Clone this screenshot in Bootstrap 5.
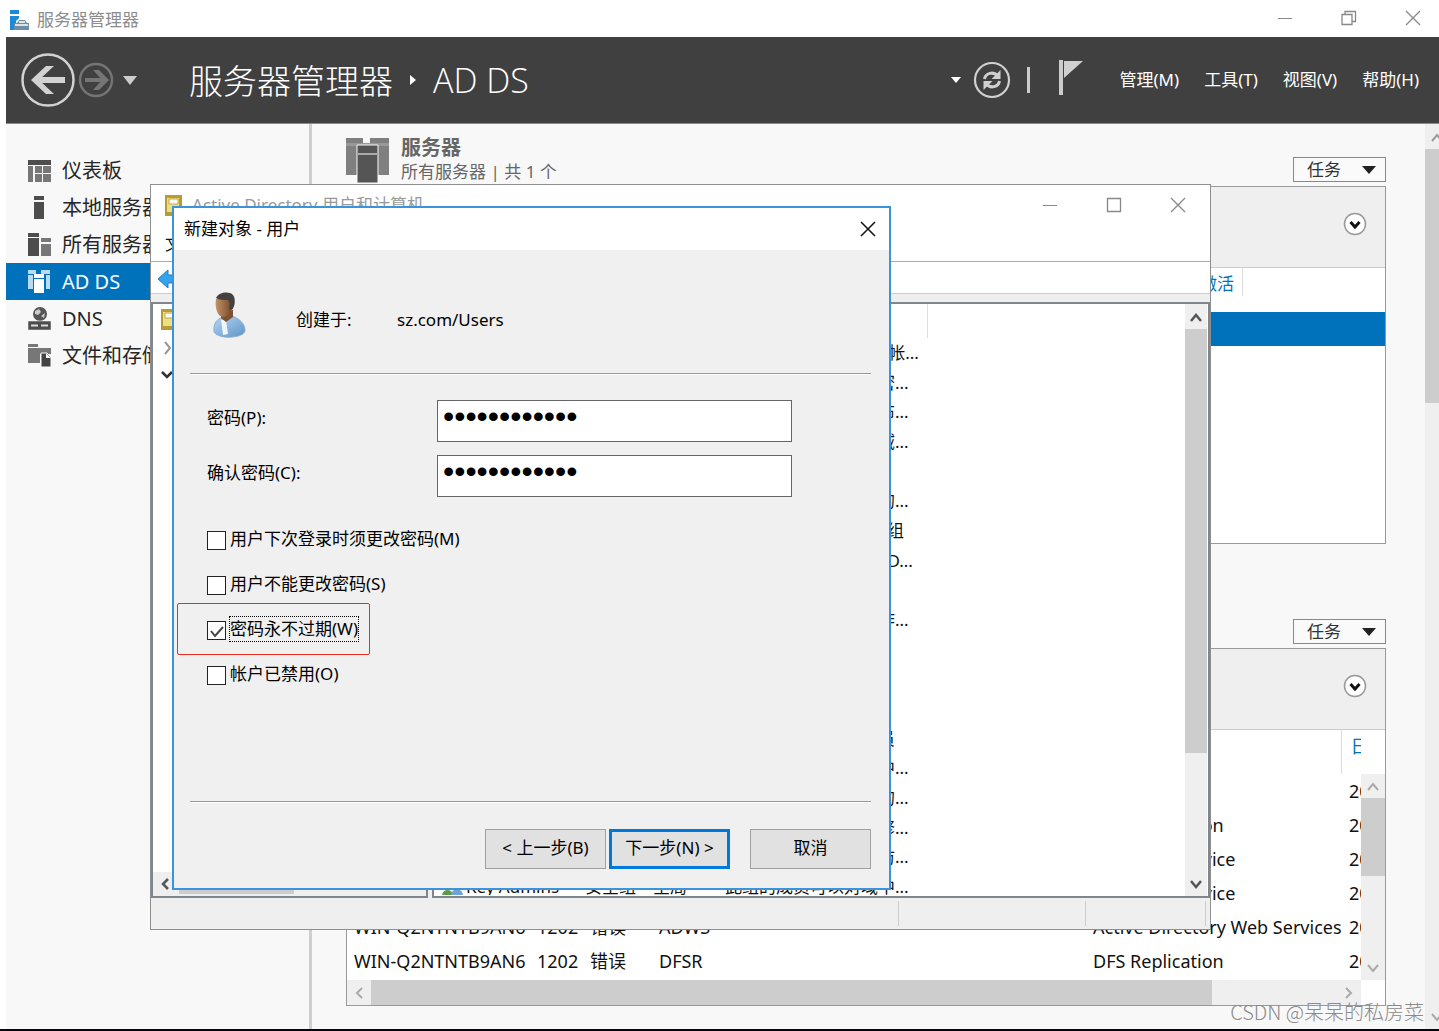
<!DOCTYPE html>
<html lang="zh-CN">
<head>
<meta charset="utf-8">
<meta name="viewport" content="width=device-width, initial-scale=1">
<title>服务器管理器</title>
<link href="https://cdn.jsdelivr.net/npm/bootstrap@5.3.0/dist/css/bootstrap.min.css" rel="stylesheet">
<style>
  body { font-family: "Noto Sans", "Noto Sans CJK SC", sans-serif; font-size: 17px; line-height: 24px; color: #111; background: #fff; }
  svg { display: block; flex: none; }
  button { color: inherit; }
  a { color: inherit; text-decoration: none; }
  .plain-btn { background: none; border: 0; padding: 0; }
  .app-shell { padding-left: 6px; border-bottom: 2px solid #05070d; overflow: hidden; }

  /* outer window */
  .app-title { height: 37px; color: #8c8c8c; padding: 3px 18px 0 3px; }
  .win-ctl { gap: 48px; }
  .app-bar { background: #404040; height: 87px; border-bottom: 1px solid #8b8b8b; color: #fff; padding: 0 20px 0 15px; }
  .crumb { font-size: 34px; line-height: 44px; font-weight: 300; font-family: "Open Sans", "Noto Sans CJK SC", sans-serif; }
  .crumb-cjk { font-family: "Noto Sans CJK SC", sans-serif; padding-left: 4px; }
  .top-menu { gap: 25px; margin-left: 36px; }

  /* navigation */
  .side { width: 306px; border-right: 3px solid #cfcfcf; background: #f8f8f8; padding-top: 28px; }
  .side a { height: 37px; font-size: 20px; padding-left: 22px; gap: 11px; color: #262626; }
  .side a.on { background: #0072bc; color: #fff; }
  .work { background: #f8f8f8; min-width: 0; }
  .tiles { padding: 0 39px 23px 34px; min-width: 0; }
  .tile-head { height: 62px; color: #666; }
  .tile-head.tall { height: 104px; }
  .tile-head h2 { font-size: 20px; line-height: 24px; margin: 0; font-weight: 700; }
  .tasks { width: 93px; height: 25px; border: 1px solid #888; background: #fafafa; padding: 0 9px 0 13px; margin-bottom: 4px; color: #333; line-height: 20px; }
  .tile { height: 358px; border: 1px solid #999; background: #fff; }
  .filter { height: 81px; background: #efefef; border-bottom: 1px solid #ccc; padding-right: 18px; }
  .expander { margin-top: 25px; }
  .col-heads { height: 44px; color: #0072bc; }
  .col-line { border-left: 1px solid #ddd; width: 139px; }
  .picked { height: 34px; background: #0072bc; }
  .events { table-layout: fixed; width: 100%; margin: 0; font-size: 18px; }
  .events td, .events th { padding: 0; height: 34px; line-height: 34px; white-space: nowrap; overflow: hidden; font-weight: 400; }
  .events th { height: 44px; line-height: 32px; color: #0072bc; vertical-align: top; }
  .events th:last-child { border-left: 1px solid #ddd; padding-left: 9px; }
  .events td:last-child { padding-left: 8px; }
  .events td:first-child { padding-left: 7px; }
  .sb { background: #efefef; }
  .sb-thumb { background: #cdcdcd; }
  .event-sb { width: 24px; margin-top: 44px; }
  .page-sb { width: 14px; overflow: hidden; }
  .mark-text { right: 15px; bottom: 5px; font-size: 20px; color: #8a8a8a; font-family: "Noto Sans CJK SC", sans-serif; font-weight: 300; }

  /* windows over the desktop */
  .mmc { left: 150px; top: 184px; width: 1061px; height: 746px; background: #efefef; border: 1px solid #8f8f8f; overflow: hidden; }
  .mmc-title { height: 40px; gap: 10px; background: #fff; color: #999; padding: 0 24px 0 14px; }
  .mmc-menu { height: 36px; background: #fff; padding-left: 14px; line-height: 38px; }
  .mmc-tools { height: 33px; background: #fff; border-top: 1px solid #aaa; border-bottom: 1px solid #ccc; padding: 6px 0 0 6px; }
  .mmc-panes { height: 596px; margin-top: 8px; gap: 4px; }
  .pane { background: #fff; border: 2px solid #80868c; }
  .pane-tree { width: 277px; }
  .list-box { height: 591px; overflow: hidden; min-width: 0; }
  .objects { table-layout: fixed; width: 494px; height: 598px; margin: 0; }
  .objects th { height: 34px; border-right: 1px solid #ddd; padding: 0; }
  .objects td { padding: 0; line-height: 24px; white-space: nowrap; overflow: hidden; }
  .objects td:first-child { padding-left: 32px; }
  .status { height: 31px; }
  .status div { border-right: 1px solid #ccc; margin: 3px 0; }

  .dlg { left: 172px; top: 206px; width: 719px; background: #f0f0f0; border: 2px solid #3b93dc; }
  .dlg-title { height: 42px; background: #fff; padding: 0 13px 0 10px; color: #000; }
  .dlg-body { padding: 42px 18px 19px 16px; color: #000; }
  .dlg-rule { border-top: 1px solid #999; border-bottom: 1px solid #fff; }
  .who { height: 46px; padding-left: 22px; margin-bottom: 35px; }
  .who span { padding-top: 10px; }
  .who span:first-of-type { width: 101px; margin-left: 50px; }
  .fields { padding: 25px 0 0 17px; margin-bottom: 113px; }
  .pw-row { height: 42px; margin-bottom: 13px; }
  .pw-row label { width: 230px; padding-bottom: 6px; }
  .pw { width: 355px; height: 42px; border: 1px solid #666; border-radius: 0; background: #fff; padding: 0 5px 9px 5px; font: 32px/32px "Liberation Sans", sans-serif; color: #000; }
  .picks { padding-top: 17px; }
  .pick-row { height: 26px; margin-bottom: 19px; gap: 4px; position: relative; }
  .pick-row input { appearance: none; width: 19px; height: 19px; border: 1px solid #222; background: #fff; margin: 4px 0 0; border-radius: 0; flex: none; }
  .pick-row .tick { position: absolute; left: 2px; top: 8px; }
  .focused { outline: 1px dotted #000; outline-offset: 0; }
  .redbox { position: absolute; left: -30px; top: -14px; width: 193px; height: 52px; border: 1px solid #ee2b20; border-radius: 2px; }
  .dlg-actions { padding-top: 26px; }
  .dlg-btn { width: 121px; height: 40px; background: #e1e1e1; border: 1px solid #a0a0a0; border-radius: 0; padding: 0 0 3px; }
  .dlg-btn.primary { border: 3px solid #0078d7; margin: 0 20px 0 3px; }
</style>
<script src="https://cdn.jsdelivr.net/npm/bootstrap@5.3.0/dist/js/bootstrap.bundle.min.js"></script>
</head>
<body>
<div class="app-shell min-vh-100 d-flex flex-column position-relative">

  <header class="app-title d-flex align-items-center">
    <svg width="20" height="20" viewBox="0 0 20 20"><path d="M1 0h9v4H1zM1 6h9v2l-3 3v9H1z" fill="#1c8ad6"/><path d="M5 13h3l2-3h6l2 3h2v7H5z" fill="#6f8fa6"/><path d="M10 12h6M6 15h13" stroke="#fff" stroke-width="1.3"/></svg>
    <span class="ms-2">服务器管理器</span>
    <div class="win-ctl d-flex align-items-center ms-auto pb-1">
      <button class="plain-btn" aria-label="最小化"><svg width="16" height="16" stroke="#888"><path d="M1 8.500h14"/></svg></button>
      <button class="plain-btn" aria-label="还原"><svg width="16" height="16" fill="none" stroke="#888" stroke-width="1.300"><path d="M1 4.500h10v10H1zM4 4V1.500h10.500v10H11"/></svg></button>
      <button class="plain-btn" aria-label="关闭"><svg width="16" height="16" stroke="#888" stroke-width="1.300"><path d="M1 1l14 14M15 1L1 15"/></svg></button>
    </div>
  </header>

  <nav class="app-bar d-flex align-items-center">
    <button class="plain-btn" aria-label="后退"><svg width="54" height="54" fill="none" stroke="#d2d2d2"><circle cx="27" cy="27" r="25.500" stroke-width="2.500"/><path d="M44 27H14" stroke-width="6"/><path d="M33 13h-8L10 27l15 14h8L18 27z" fill="#d2d2d2" stroke="none"/></svg></button>
    <button class="plain-btn ms-1" aria-label="前进"><svg width="36" height="38" fill="none" stroke="#757575"><circle cx="17" cy="19" r="16" stroke-width="2.500"/><path d="M6 19h20" stroke-width="4"/><path d="M14 9h6l10 10-10 10h-6l9-10z" fill="#757575" stroke="none"/></svg></button>
    <svg class="ms-2" width="14" height="9"><path d="M0 0h14L7 9z" fill="#ccc"/></svg>
    <span class="crumb crumb-cjk ms-5">服务器管理器</span>
    <svg class="ms-3" width="8" height="12"><path d="M1 1l6 5-6 5z" fill="#fff"/></svg>
    <span class="crumb ms-3">AD DS</span>
    <svg class="ms-auto" width="10" height="6"><path d="M0 0h10L5 6z" fill="#fff"/></svg>
    <button class="plain-btn ms-2 ps-1" aria-label="刷新"><svg width="38" height="38" fill="none" stroke="#d0d0d0"><circle cx="19" cy="19" r="17" stroke-width="2.200"/><path d="M11.500 18c1-6 9-8 13-3M26.500 20c-1 6-9 8-13 3" stroke-width="3"/><path d="M27.500 9v9h-9zM10.500 29v-9h9z" fill="#d0d0d0" stroke="none"/></svg></button>
    <svg class="ms-3" width="3" height="26"><path d="M0 0h3v26H0z" fill="#ccc"/></svg>
    <button class="plain-btn ms-4 pb-1" aria-label="通知"><svg width="30" height="36" viewBox="-5 0 30 36"><path d="M0 0h4v35H0z" fill="#ccc"/><path d="M5 1h19L5 18z" fill="#d0d0d0"/></svg></button>
    <div class="top-menu d-flex"><a href="#">管理(M)</a><a href="#">工具(T)</a><a href="#">视图(V)</a><a href="#">帮助(H)</a></div>
  </nav>

  <div class="d-flex flex-fill">
    <aside class="side flex-shrink-0">
      <a href="#" class="d-flex align-items-center"><svg width="23" height="22"><path d="M0 0h23v5H0z" fill="#4d4d4d"/><path d="M0 6h5v16H0zM7 6h7v7H7zM15 6h8v7h-8zM7 14h7v8H7zM15 14h8v8h-8z" fill="#777"/></svg>仪表板</a>
      <a href="#" class="d-flex align-items-center"><svg width="23" height="23"><path d="M6 0h10v4H6zM6 6h10v17H6z" fill="#4d4d4d"/></svg>本地服务器</a>
      <a href="#" class="d-flex align-items-center"><svg width="23" height="23"><path d="M0 0h11v4H0zM0 5h11v18H0z" fill="#4d4d4d"/><path d="M13 5h10v4H13zM13 11h10v12H13z" fill="#777"/></svg>所有服务器</a>
      <a href="#" class="on d-flex align-items-center"><svg width="23" height="23"><path d="M0 0h8v4H0zM0 5h5v14H0zM13 0h9v4h-9zM18 5h4v14h-4z" fill="#b9daf0"/><path d="M6 4h10v4H6zM6 9h10v14H6z" fill="#fff"/></svg>AD DS</a>
      <a href="#" class="d-flex align-items-center"><svg width="23" height="23"><circle cx="12" cy="7" r="7" fill="#555"/><path d="M7 4l4-2 2 3-3 3-3-1zM13 9l4-3-1 5z" fill="#ccc"/><path d="M0 14h23v9H0z" fill="#4d4d4d" stroke="#f8f8f8" stroke-width=".5"/><path d="M3 18.500h7M13 18.500h7" stroke="#ddd" stroke-width="2"/></svg>DNS</a>
      <a href="#" class="d-flex align-items-center"><svg width="23" height="23"><path d="M0 0h10v3H0zM0 4h23v6H12v9H0z" fill="#777"/><path d="M13 9h6l4 4v10H13z" fill="#444" stroke="#f8f8f8"/><path d="M18 9v5h5z" fill="#f8f8f8"/></svg>文件和存储服务</a>
    </aside>

    <main class="work d-flex flex-fill">
      <div class="tiles flex-fill">
        <section>
          <div class="tile-head d-flex align-items-end">
            <svg width="43" height="48"><path d="M0 0h17v5H0zM0 8h17v29H0zM24 0h19v5H24zM24 8h19v29H24z" fill="#808080"/><path d="M0 5h43v3H0z" fill="#999"/><path d="M11 7h21v38H11z" fill="#555" stroke="#f8f8f8"/><path d="M12 16h19" stroke="#aaa" stroke-width="2"/></svg>
            <div class="ms-2 ps-1 align-self-start pt-2 mt-1"><h2>服务器</h2><div>所有服务器 | 共 1 个</div></div>
            <button class="tasks ms-auto d-flex align-items-center justify-content-between">任务<svg width="14" height="8"><path d="M0 0h14L7 8z" fill="#222"/></svg></button>
          </div>
          <div class="tile">
            <div class="filter d-flex justify-content-end align-items-start"><button class="plain-btn expander" aria-label="展开"><svg width="24" height="24" fill="none"><circle cx="12" cy="12" r="10.500" fill="#fff" stroke="#999" stroke-width="1.500"/><path d="M7.500 10l4.500 5 4.500-5" stroke="#111" stroke-width="3"/></svg></button></div>
            <div class="col-heads d-flex justify-content-end pe-1"><span class="pt-1 pe-2">Windows 激活</span><span class="col-line mb-3"></span></div>
            <div class="picked"></div>
          </div>
        </section>
        <section>
          <div class="tile-head tall d-flex align-items-end">
            <button class="tasks ms-auto d-flex align-items-center justify-content-between">任务<svg width="14" height="8"><path d="M0 0h14L7 8z" fill="#222"/></svg></button>
          </div>
          <div class="tile d-flex flex-column">
            <div class="filter d-flex justify-content-end align-items-start flex-shrink-0"><button class="plain-btn expander" aria-label="展开"><svg width="24" height="24" fill="none"><circle cx="12" cy="12" r="10.500" fill="#fff" stroke="#999" stroke-width="1.500"/><path d="M7.500 10l4.500 5 4.500-5" stroke="#111" stroke-width="3"/></svg></button></div>
            <div class="d-flex flex-fill">
              <div class="flex-fill overflow-hidden">
                <table class="events">
                  <colgroup><col style="width:190px"><col style="width:53px"><col style="width:69px"><col><col style="width:248px"><col style="width:20px"></colgroup>
                  <thead><tr><th></th><th></th><th></th><th></th><th></th><th>日期</th></tr></thead>
                  <tbody>
                    <tr><td></td><td></td><td></td><td></td><td></td><td>2020</td></tr>
                    <tr><td></td><td></td><td></td><td></td><td>DFS Replication</td><td>2020</td></tr>
                    <tr><td></td><td></td><td></td><td></td><td>Directory Service</td><td>2020</td></tr>
                    <tr><td></td><td></td><td></td><td></td><td>Directory Service</td><td>2020</td></tr>
                    <tr><td>WIN-Q2NTNTB9AN6</td><td>1202</td><td>错误</td><td>ADWS</td><td>Active Directory Web Services</td><td>2020</td></tr>
                    <tr><td>WIN-Q2NTNTB9AN6</td><td>1202</td><td>错误</td><td>DFSR</td><td>DFS Replication</td><td>2020</td></tr>
                  </tbody>
                </table>
              </div>
              <div class="sb event-sb d-flex flex-column flex-shrink-0 align-items-center">
                <svg class="my-1" width="12" height="16" fill="none" stroke="#aaa" stroke-width="2"><path d="M1 12l5-6 5 6"/></svg>
                <div class="sb-thumb w-100" style="height:78px"></div>
                <svg class="mt-auto mb-1" width="12" height="16" fill="none" stroke="#aaa" stroke-width="2"><path d="M1 5l5 6 5-6"/></svg>
              </div>
            </div>
            <div class="sb d-flex align-items-center" style="height:25px;margin-right:24px">
              <svg class="mx-2" width="8" height="12" fill="none" stroke="#aaa" stroke-width="2"><path d="M7 1L2 6l5 5"/></svg>
              <div class="sb-thumb h-100 flex-fill"></div>
              <svg class="me-2" width="141" height="12" fill="none" stroke="#aaa" stroke-width="2"><path d="M134 1l5 5-5 5"/></svg>
            </div>
          </div>
        </section>
      </div>
      <div class="sb page-sb d-flex flex-column flex-shrink-0">
        <svg width="24" height="25" fill="none" stroke="#999" stroke-width="2"><path d="M7 17l5-6 5 6"/></svg>
        <div class="sb-thumb" style="height:254px"></div>
        <svg class="mt-auto" width="24" height="24" fill="none" stroke="#aaa" stroke-width="2"><path d="M7 9l5 6 5-6"/></svg>
      </div>
    </main>
  </div>

  <section class="mmc position-absolute" aria-label="Active Directory 用户和计算机">
    <div class="mmc-title d-flex align-items-center">
      <svg width="17" height="21"><path d="M0 0h17v21H0z" fill="#b79c35"/><path d="M2 3h12v14H2z" fill="#efdf83"/><path d="M4 4h9v5H4z" fill="#fff" stroke="#c3a83f"/></svg>
      <span>Active Directory 用户和计算机</span>
      <div class="win-ctl d-flex ms-auto">
        <button class="plain-btn" aria-label="最小化"><svg width="16" height="16" stroke="#888"><path d="M1 8.500h14"/></svg></button>
        <button class="plain-btn" aria-label="最大化"><svg width="16" height="16" fill="none" stroke="#888" stroke-width="1.300"><path d="M1.500 1.500h13v13h-13z"/></svg></button>
        <button class="plain-btn" aria-label="关闭"><svg width="16" height="16" stroke="#888" stroke-width="1.300"><path d="M1 1l14 14M15 1L1 15"/></svg></button>
      </div>
    </div>
    <div class="mmc-menu">文件(F)</div>
    <div class="mmc-tools"><svg width="22" height="22"><path d="M1 11L11 2v5h11v8H11v5z" fill="#35a3ec" stroke="#1c7fc4"/></svg></div>
    <div class="mmc-panes d-flex">
      <div class="pane pane-tree d-flex flex-column">
        <div class="ps-2 pt-1 mb-auto">
          <svg width="17" height="23"><path d="M0 1h17v21H0z" fill="#b79c35"/><path d="M2 4h15v14H2z" fill="#efdf83"/><path d="M4 5h13v5H4z" fill="#fff" stroke="#c3a83f"/></svg>
          <svg class="mt-1 pt-1" width="12" height="20" fill="none" stroke="#999" stroke-width="2"><path d="M4 3l5 6-5 6"/></svg>
          <svg class="mt-2" width="14" height="20" fill="none" stroke="#333" stroke-width="2.500"><path d="M1 9l5 5 5-5"/></svg>
        </div>
        <div class="sb d-flex align-items-center" style="height:24px">
          <svg class="mx-2" width="10" height="14" fill="none" stroke="#555" stroke-width="2.500"><path d="M7 2L2 7l5 5"/></svg>
          <div class="sb-thumb" style="width:115px;height:20px"></div>
        </div>
      </div>
      <div class="pane flex-fill d-flex">
        <div class="list-box flex-fill">
          <table class="objects">
            <colgroup><col style="width:151px"><col style="width:68px"><col style="width:72px"><col></colgroup>
            <thead><tr><th></th><th></th><th></th><th></th></tr></thead>
            <tbody>
              <tr><td></td><td></td><td></td><td>管理计算机(域)的内置帐...</td></tr>
              <tr><td></td><td></td><td></td><td>允许将此组中成员的密...</td></tr>
              <tr><td></td><td></td><td></td><td>此组的成员被允许发布...</td></tr>
              <tr><td></td><td></td><td></td><td>可以克隆此组中作为域...</td></tr>
              <tr><td></td><td></td><td></td><td>&nbsp;</td></tr>
              <tr><td></td><td></td><td></td><td>不允许将此组中成员的...</td></tr>
              <tr><td></td><td></td><td></td><td>DNS Administrators 组</td></tr>
              <tr><td></td><td></td><td></td><td>允许替其他客户端(如 D...</td></tr>
              <tr><td></td><td></td><td></td><td>&nbsp;</td></tr>
              <tr><td></td><td></td><td></td><td>加入到域中的所有工作...</td></tr>
              <tr><td></td><td></td><td></td><td>&nbsp;</td></tr>
              <tr><td></td><td></td><td></td><td>&nbsp;</td></tr>
              <tr><td></td><td></td><td></td><td>&nbsp;</td></tr>
              <tr><td></td><td></td><td></td><td>企业的指定系统管理员</td></tr>
              <tr><td></td><td></td><td></td><td>此组的成员可以对林中...</td></tr>
              <tr><td></td><td></td><td></td><td>该组的成员是企业中的...</td></tr>
              <tr><td></td><td></td><td></td><td>这个组中的成员可以修...</td></tr>
              <tr><td></td><td></td><td></td><td>供来宾访问计算机或访...</td></tr>
              <tr><td class="position-relative"><svg class="position-absolute" style="left:8px;top:5px" width="22" height="20"><circle cx="6" cy="6" r="4" fill="#8a5f3c"/><path d="M0 19c0-8 11-8 11 0z" fill="#5c9a4a"/><circle cx="15" cy="6" r="4" fill="#b98a5c"/><path d="M9 19c0-9 12-9 12 0z" fill="#6fa3d8"/></svg>Key Admins</td><td>安全组</td><td>全局</td><td>此组的成员可以对域中...</td></tr>
            </tbody>
          </table>
        </div>
        <div class="sb d-flex flex-column align-items-center flex-shrink-0" style="width:22px;margin-right:1px">
          <svg class="my-1" width="14" height="17" fill="none" stroke="#555" stroke-width="2.500"><path d="M2 13l5-6 5 6"/></svg>
          <div class="sb-thumb w-100" style="height:424px"></div>
          <svg class="mt-auto mb-1" width="14" height="16" fill="none" stroke="#555" stroke-width="2.500"><path d="M2 5l5 6 5-6"/></svg>
        </div>
      </div>
    </div>
    <div class="status d-flex pe-1"><div class="flex-fill"></div><div style="width:187px"></div><div style="width:120px"></div></div>
  </section>

  <section class="dlg position-absolute" role="dialog" aria-label="新建对象 - 用户">
    <div class="dlg-title d-flex align-items-center justify-content-between"><span>新建对象 - 用户</span>
      <button class="plain-btn" aria-label="关闭"><svg width="16" height="16" stroke="#111" stroke-width="1.500"><path d="M1 1l14 14M15 1L1 15"/></svg></button></div>
    <form class="dlg-body">
      <div class="who d-flex align-items-center">
        <svg width="34" height="46" viewBox="0 0 34 46">
          <defs><linearGradient id="skin"><stop offset="0" stop-color="#c49468"/><stop offset="1" stop-color="#6e4324"/></linearGradient><linearGradient id="shirt" x2="1" y2="1"><stop offset="0" stop-color="#b5d6f3"/><stop offset="1" stop-color="#5f94c9"/></linearGradient></defs>
          <path d="M2 40C1 31 5 27 11 25l9-1c7 2 13 8 13 14 0 3-3 5-7 6-7 2-20 2-24-4z" fill="url(#shirt)" stroke="#7fa5c6" stroke-width=".8"/>
          <path d="M9 28l5 0 2 14-5 1z" fill="#eef5fb"/>
          <path d="M9 20v6l5 4 7-5v-7z" fill="#7d5030"/>
          <path d="M4 7c-1 6 0 12 3 16 3 3 7 2 9 0 3-3 5-8 5-13L12 4z" fill="url(#skin)"/>
          <path d="M4 6C7 0 17-1 21 3c3 4 2 11-1 15l-3-1c1-4 1-7-1-9-4 0-9 0-12-2z" fill="#45413e"/>
        </svg>
        <span>创建于:</span><span>sz.com/Users</span>
      </div>
      <div class="dlg-rule"></div>
      <div class="fields">
        <div class="pw-row d-flex align-items-center"><label for="pw1">密码(P):</label><input class="pw" id="pw1" type="password" value="abcdefgh1234"></div>
        <div class="pw-row d-flex align-items-center"><label for="pw2">确认密码(C):</label><input class="pw" id="pw2" type="password" value="abcdefgh1234"></div>
        <div class="picks">
          <div class="pick-row d-flex align-items-start"><input type="checkbox" id="c1"><label for="c1">用户下次登录时须更改密码(M)</label></div>
          <div class="pick-row d-flex align-items-start"><input type="checkbox" id="c2"><label for="c2">用户不能更改密码(S)</label></div>
          <div class="pick-row d-flex align-items-start"><input type="checkbox" id="c3" checked><svg class="tick" width="16" height="13" fill="none" stroke="#444" stroke-width="2"><path d="M2 6l4 5 8-9"/></svg><label for="c3" class="focused">密码永不过期(W)</label><span class="redbox"></span></div>
          <div class="pick-row d-flex align-items-start"><input type="checkbox" id="c4"><label for="c4">帐户已禁用(O)</label></div>
        </div>
      </div>
      <div class="dlg-rule"></div>
      <div class="dlg-actions d-flex justify-content-end">
        <button type="button" class="dlg-btn">&lt; 上一步(B)</button>
        <button type="button" class="dlg-btn primary">下一步(N) &gt;</button>
        <button type="button" class="dlg-btn">取消</button>
      </div>
    </form>
  </section>

  <div class="mark-text position-absolute">CSDN @呆呆的私房菜</div>
</div>
</body>
</html>
